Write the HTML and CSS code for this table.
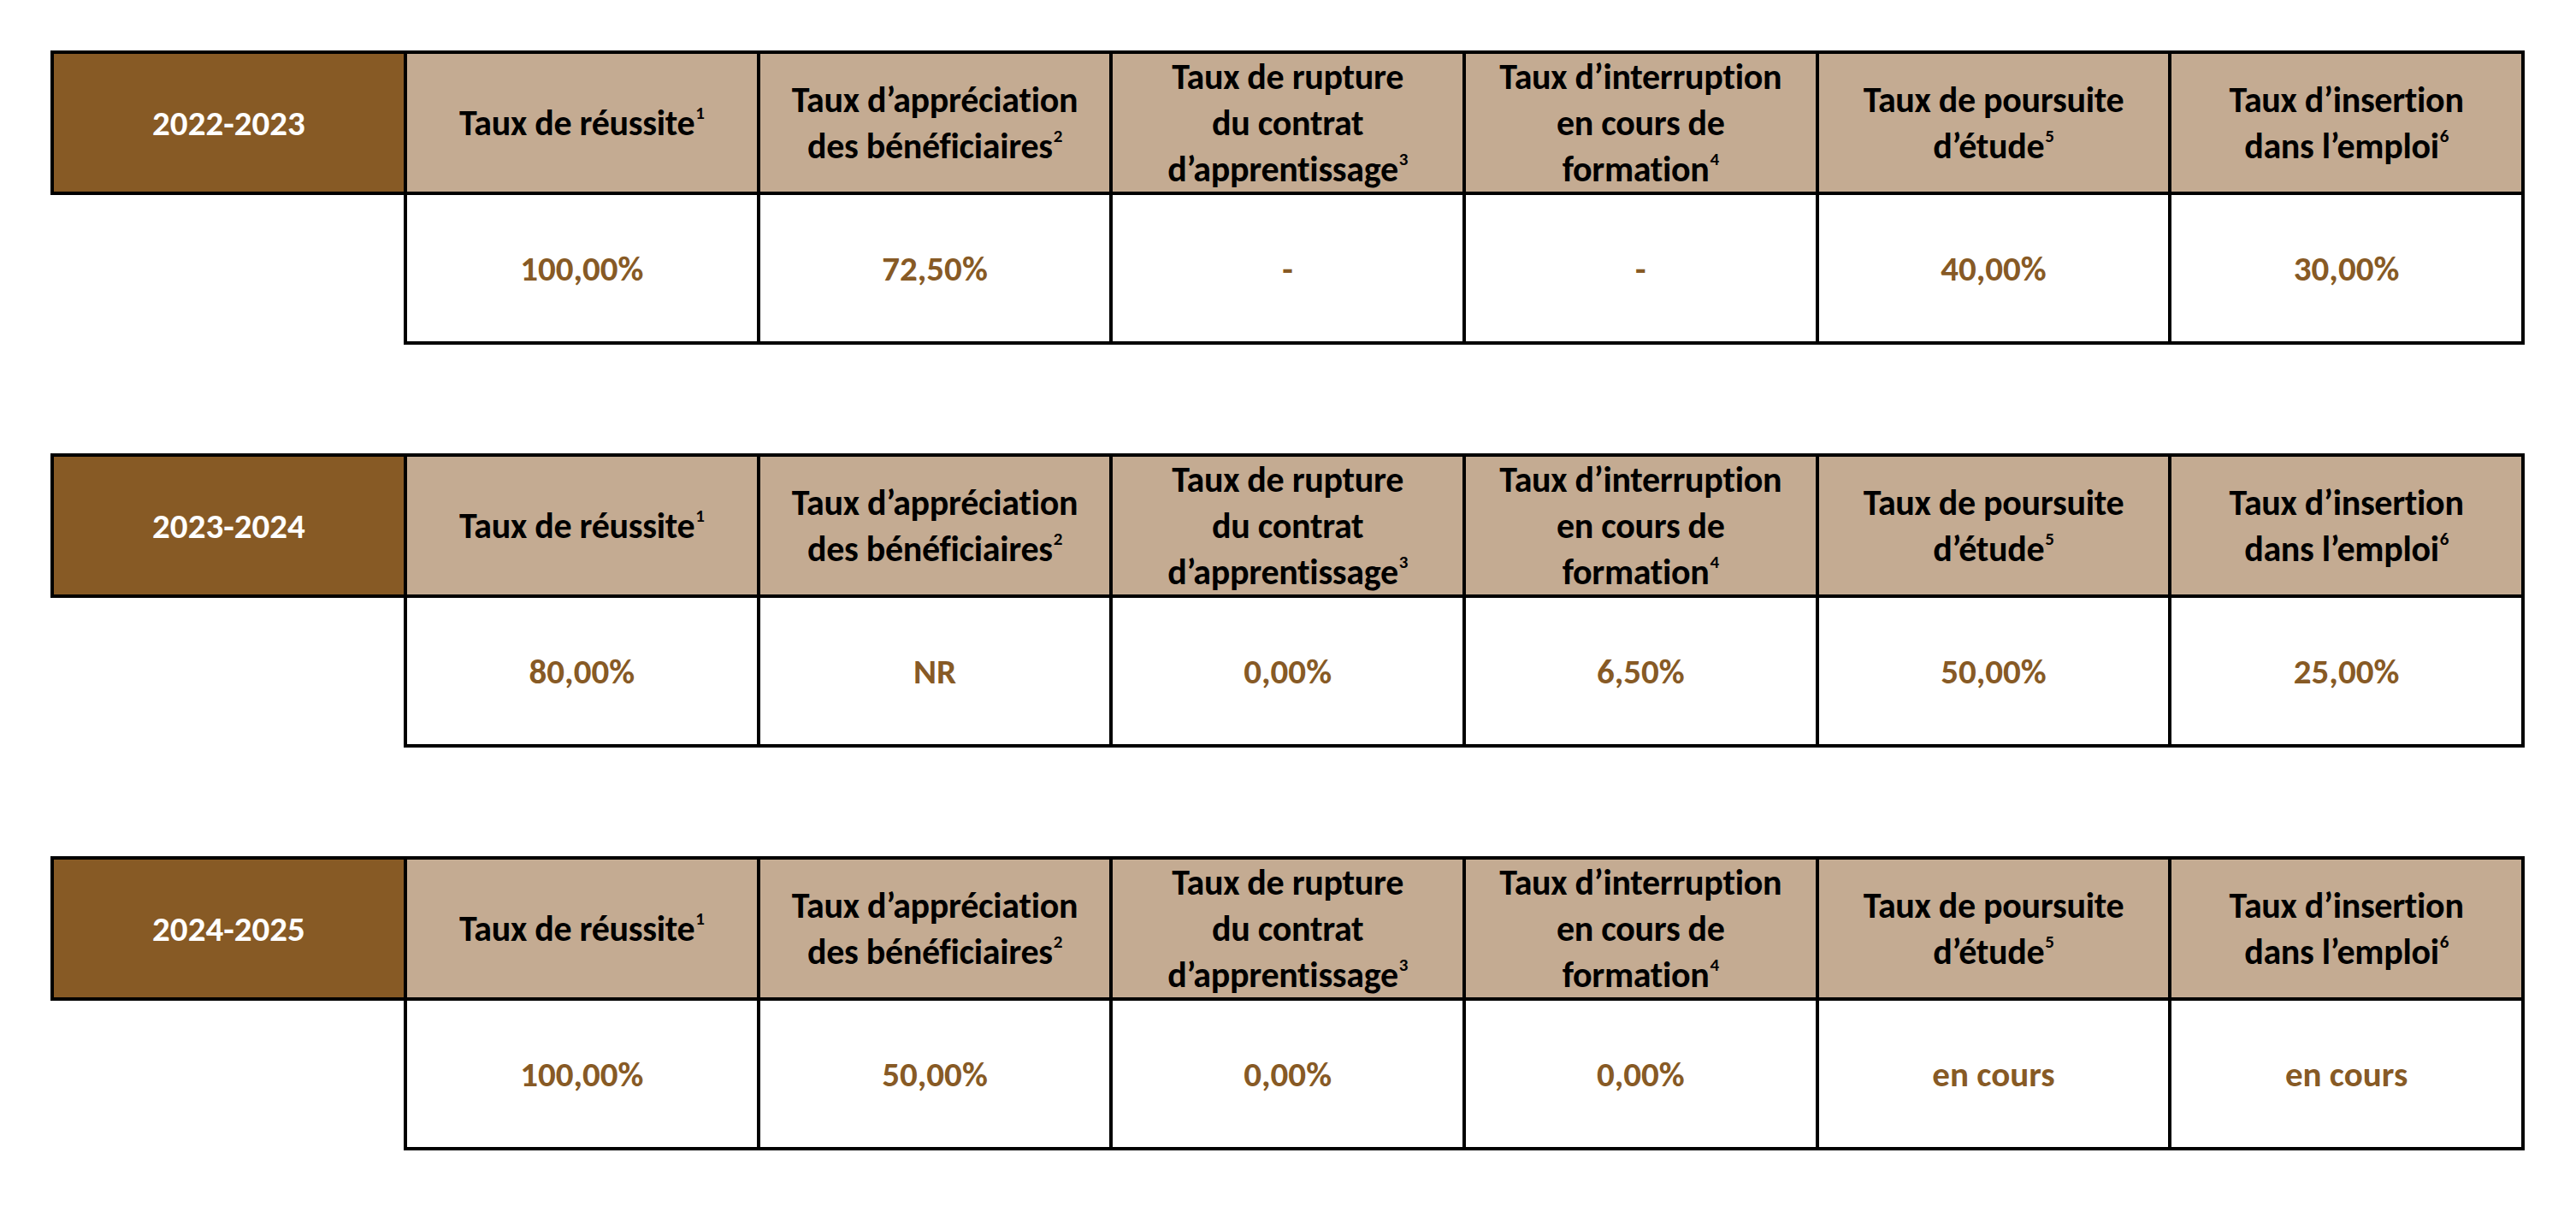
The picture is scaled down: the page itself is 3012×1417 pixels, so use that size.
FILE: index.html
```html
<!DOCTYPE html>
<html lang="fr">
<head>
<meta charset="utf-8">
<title>Indicateurs</title>
<link rel="stylesheet" href="styles.css">
</head>
<body>
<div class="page">
  <section class="stats">
    <div class="cell year"><span>2022-2023</span></div>
    <div class="cell head"><span>Taux de réussite<sup>1</sup></span></div>
    <div class="cell head"><span>Taux d’appréciation<br>des bénéficiaires<sup>2</sup></span></div>
    <div class="cell head"><span>Taux de rupture<br>du contrat<br>d’apprentissage<sup>3</sup></span></div>
    <div class="cell head"><span>Taux d’interruption<br>en cours de<br>formation<sup>4</sup></span></div>
    <div class="cell head"><span>Taux de poursuite<br>d’étude<sup>5</sup></span></div>
    <div class="cell head"><span>Taux d’insertion<br>dans l’emploi<sup>6</sup></span></div>
    <div class="cell blank"></div>
    <div class="cell val"><span>100,00%</span></div>
    <div class="cell val"><span>72,50%</span></div>
    <div class="cell val"><span>-</span></div>
    <div class="cell val"><span>-</span></div>
    <div class="cell val"><span>40,00%</span></div>
    <div class="cell val"><span>30,00%</span></div>
  </section>
  <section class="stats">
    <div class="cell year"><span>2023-2024</span></div>
    <div class="cell head"><span>Taux de réussite<sup>1</sup></span></div>
    <div class="cell head"><span>Taux d’appréciation<br>des bénéficiaires<sup>2</sup></span></div>
    <div class="cell head"><span>Taux de rupture<br>du contrat<br>d’apprentissage<sup>3</sup></span></div>
    <div class="cell head"><span>Taux d’interruption<br>en cours de<br>formation<sup>4</sup></span></div>
    <div class="cell head"><span>Taux de poursuite<br>d’étude<sup>5</sup></span></div>
    <div class="cell head"><span>Taux d’insertion<br>dans l’emploi<sup>6</sup></span></div>
    <div class="cell blank"></div>
    <div class="cell val"><span>80,00%</span></div>
    <div class="cell val"><span>NR</span></div>
    <div class="cell val"><span>0,00%</span></div>
    <div class="cell val"><span>6,50%</span></div>
    <div class="cell val"><span>50,00%</span></div>
    <div class="cell val"><span>25,00%</span></div>
  </section>
  <section class="stats">
    <div class="cell year"><span>2024-2025</span></div>
    <div class="cell head"><span>Taux de réussite<sup>1</sup></span></div>
    <div class="cell head"><span>Taux d’appréciation<br>des bénéficiaires<sup>2</sup></span></div>
    <div class="cell head"><span>Taux de rupture<br>du contrat<br>d’apprentissage<sup>3</sup></span></div>
    <div class="cell head"><span>Taux d’interruption<br>en cours de<br>formation<sup>4</sup></span></div>
    <div class="cell head"><span>Taux de poursuite<br>d’étude<sup>5</sup></span></div>
    <div class="cell head"><span>Taux d’insertion<br>dans l’emploi<sup>6</sup></span></div>
    <div class="cell blank"></div>
    <div class="cell val"><span>100,00%</span></div>
    <div class="cell val"><span>50,00%</span></div>
    <div class="cell val"><span>0,00%</span></div>
    <div class="cell val"><span>0,00%</span></div>
    <div class="cell val"><span>en cours</span></div>
    <div class="cell val"><span>en cours</span></div>
  </section>
</div>
</body>
</html>
```
FILE: styles.css
```css
html, body {
  margin: 0;
  padding: 0;
  background: #ffffff;
}
body {
  font-family: Carlito, Calibri, Lato, "Liberation Sans", sans-serif;
  font-weight: 700;
  color: #000;
}
.page {
  display: flex;
  flex-direction: column;
  gap: 127px;
  padding: 59px 0 0 59px;
}
.stats {
  display: grid;
  grid-template-columns: 417px repeat(6, 412.67px);
  grid-template-rows: 169px 175px;
  width: 2893px;
}
.cell {
  display: flex;
  align-items: center;
  justify-content: center;
  text-align: center;
  box-sizing: border-box;
  font-size: 41px;
  line-height: 48px;
}
.head, .year {
  border-top: 4px solid #000;
  border-bottom: 4px solid #000;
  border-right: 4px solid #000;
}
.year {
  border-left: 4px solid #000;
  background: #875a25;
  color: #ffffff;
}
.head {
  background: #c4ab92;
  color: #000;
  font-size: 42px;
  line-height: 54px;
  letter-spacing: -0.3px;
}
.blank {
  border-right: 4px solid #000;
}
.val {
  border-right: 4px solid #000;
  border-bottom: 4px solid #000;
  color: #875a25;
}
sup {
  font-size: 0.5em;
  line-height: 0;
  vertical-align: 0.9em;
  margin-left: 1px;
}
```
